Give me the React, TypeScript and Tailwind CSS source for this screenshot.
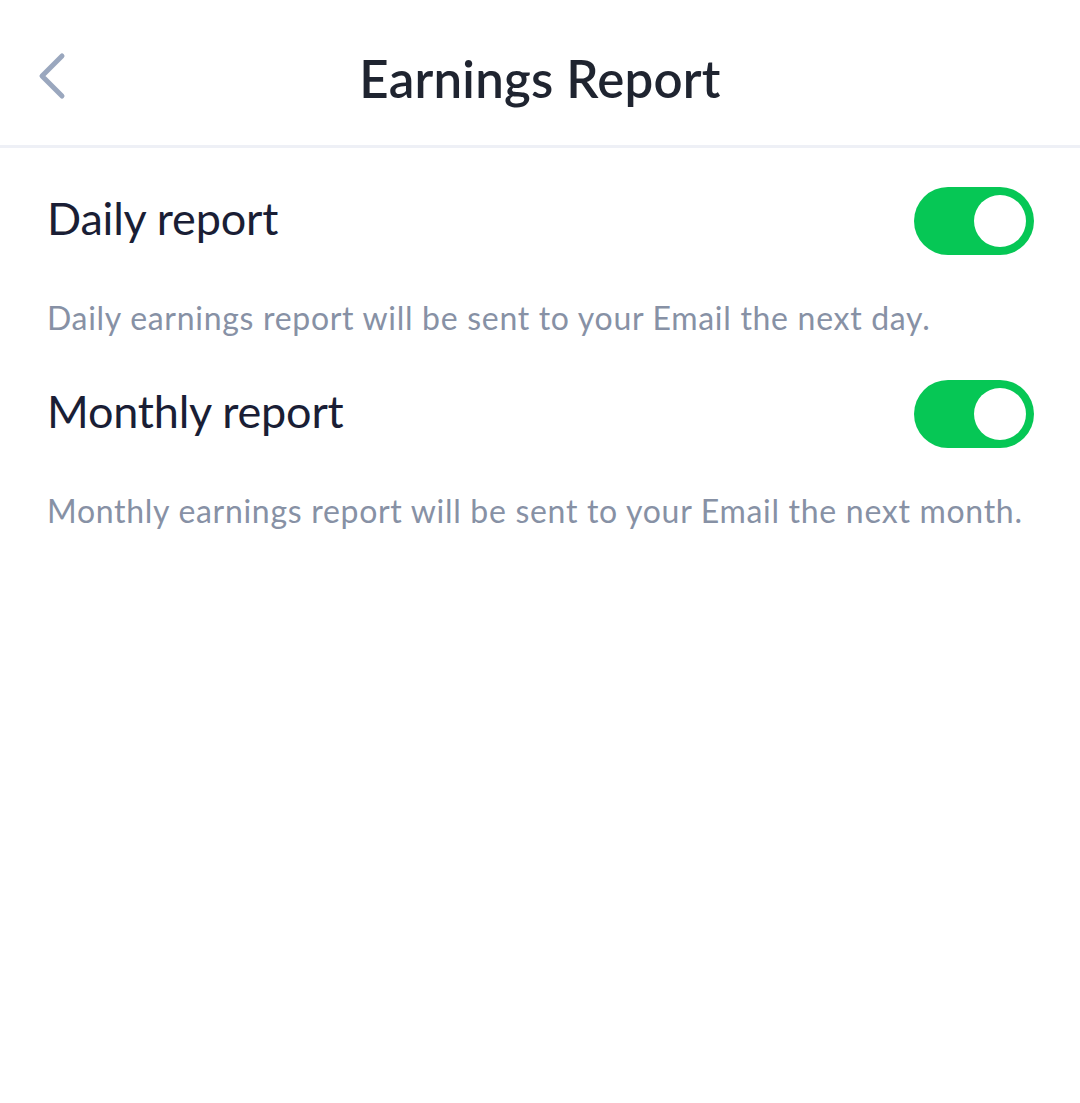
import { useState } from 'react';

// Earnings report settings screen: header with back button, two report toggles.

const font = { fontFamily: 'Lato, "Noto Sans", sans-serif' };

interface ToggleProps {
  checked: boolean;
  onChange: (checked: boolean) => void;
}

function Toggle({ checked, onChange }: ToggleProps) {
  return (
    <button
      type="button"
      onClick={() => onChange(!checked)}
      className={`flex h-[68px] w-[120px] shrink-0 items-center rounded-full px-[8px] ${
        checked ? 'justify-end bg-[#06c755]' : 'justify-start bg-[#d6dbe4]'
      }`}
    >
      <span className="block h-[52px] w-[52px] rounded-full bg-white" />
    </button>
  );
}

interface ReportRowProps {
  label: string;
  description: string;
  checked: boolean;
  onChange: (checked: boolean) => void;
}

function ReportRow({ label, description, checked, onChange }: ReportRowProps) {
  return (
    <div className="pt-[39px]">
      <div className="flex h-[68px] items-center justify-between">
        <span className="pb-[6px] text-[45px] leading-none tracking-[-0.2px] text-[#1a1e35]">{label}</span>
        <Toggle checked={checked} onChange={onChange} />
      </div>
      <p className="mt-[40px] text-[32px] leading-[46px] tracking-[0.7px] text-[#8791a5]">{description}</p>
    </div>
  );
}

export default function App() {
  const [daily, setDaily] = useState(true);
  const [monthly, setMonthly] = useState(true);

  return (
    <div className="min-h-[1103px] w-[1080px] bg-white" style={font}>
      <header className="relative flex h-[148px] items-center justify-center border-b-[3px] border-[#eef0f6] pt-[12px]">
        <button type="button" className="absolute left-[35px] top-[52px] p-0">
          <svg width="32" height="48" viewBox="0 0 32 48" fill="none">
            <path
              d="M27 4 L7 24 L27 44"
              stroke="#9aa7be"
              strokeWidth="5"
              strokeLinecap="round"
              strokeLinejoin="round"
            />
          </svg>
        </button>
        <h1 className="text-[51px] font-semibold leading-none tracking-[0.2px] text-[#1f2430]">Earnings Report</h1>
      </header>

      <div className="px-[47px] pr-[46px]">
        <ReportRow
          label="Daily report"
          description="Daily earnings report will be sent to your Email the next day."
          checked={daily}
          onChange={setDaily}
        />
        <ReportRow
          label="Monthly report"
          description="Monthly earnings report will be sent to your Email the next month."
          checked={monthly}
          onChange={setMonthly}
        />
      </div>
    </div>
  );
}
